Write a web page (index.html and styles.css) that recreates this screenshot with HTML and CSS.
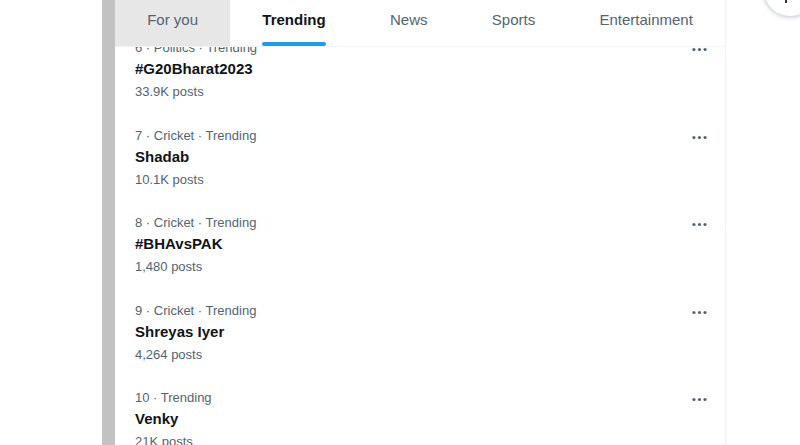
FILE: index.html
```html
<!DOCTYPE html>
<html>
<head>
<meta charset="utf-8">
<link rel="stylesheet" href="styles.css">
</head>
<body>
<div class="page">
  <div class="spacer"></div>
  <div class="rail"></div>
  <main class="column">
    <nav class="tabs">
      <div class="tab hover"><div class="inner"><span class="label">For you</span><span class="bar"></span></div></div>
      <div class="tab active"><div class="inner"><span class="label">Trending</span><span class="bar"></span></div></div>
      <div class="tab"><div class="inner"><span class="label">News</span><span class="bar"></span></div></div>
      <div class="tab"><div class="inner"><span class="label">Sports</span><span class="bar"></span></div></div>
      <div class="tab"><div class="inner"><span class="label">Entertainment</span><span class="bar"></span></div></div>
    </nav>
    <section class="list">
      <div class="trend first">
        <div class="info">
          <div class="meta">6 · Politics · Trending</div>
          <div class="title">#G20Bharat2023</div>
          <div class="posts">33.9K posts</div>
        </div>
        <svg class="more" viewBox="0 0 24 24"><circle cx="5" cy="12" r="2"/><circle cx="12" cy="12" r="2"/><circle cx="19" cy="12" r="2"/></svg>
      </div>
      <div class="trend">
        <div class="info">
          <div class="meta">7 · Cricket · Trending</div>
          <div class="title">Shadab</div>
          <div class="posts">10.1K posts</div>
        </div>
        <svg class="more" viewBox="0 0 24 24"><circle cx="5" cy="12" r="2"/><circle cx="12" cy="12" r="2"/><circle cx="19" cy="12" r="2"/></svg>
      </div>
      <div class="trend">
        <div class="info">
          <div class="meta">8 · Cricket · Trending</div>
          <div class="title">#BHAvsPAK</div>
          <div class="posts">1,480 posts</div>
        </div>
        <svg class="more" viewBox="0 0 24 24"><circle cx="5" cy="12" r="2"/><circle cx="12" cy="12" r="2"/><circle cx="19" cy="12" r="2"/></svg>
      </div>
      <div class="trend">
        <div class="info">
          <div class="meta">9 · Cricket · Trending</div>
          <div class="title">Shreyas Iyer</div>
          <div class="posts">4,264 posts</div>
        </div>
        <svg class="more" viewBox="0 0 24 24"><circle cx="5" cy="12" r="2"/><circle cx="12" cy="12" r="2"/><circle cx="19" cy="12" r="2"/></svg>
      </div>
      <div class="trend">
        <div class="info">
          <div class="meta">10 · Trending</div>
          <div class="title">Venky</div>
          <div class="posts">21K posts</div>
        </div>
        <svg class="more" viewBox="0 0 24 24"><circle cx="5" cy="12" r="2"/><circle cx="12" cy="12" r="2"/><circle cx="19" cy="12" r="2"/></svg>
      </div>
    </section>
  </main>
  <aside class="side"></aside>
  <div class="fab"><span class="tick"></span></div>
</div>
</body>
</html>
```

FILE: styles.css
```css
html, body {
  margin: 0;
  padding: 0;
  background: #ffffff;
  overflow: hidden;
}
body {
  font-family: "Liberation Sans", Arial, sans-serif;
  color: #0f1419;
}
.page {
  display: flex;
  height: 445px;
  overflow: hidden;
  position: relative;
}
.spacer {
  width: 102px;
  flex: none;
}
.rail {
  width: 13px;
  flex: none;
  background: #c2c2c2;
}
.column {
  width: 610px;
  flex: none;
  border-right: 1px solid #eff3f4;
  display: flex;
  flex-direction: column;
  overflow: hidden;
}
.side {
  flex: 1;
}
.tabs {
  position: relative;
  z-index: 2;
  display: flex;
  height: 46px;
  border-bottom: 1px solid #eff3f4;
  background: rgba(255, 255, 255, 0.92);
  flex: none;
}
.tab {
  flex: 1 1 auto;
  display: flex;
  justify-content: center;
  padding: 0 16px;
  font-size: 15px;
  color: #536471;
}
.tab.hover {
  background: #e7e7e8;
}
.inner {
  display: flex;
  flex-direction: column;
}
.label {
  display: block;
  line-height: 20px;
  padding-top: 10px;
}
.bar {
  display: block;
  height: 4px;
  margin-top: 12px;
  border-radius: 9999px;
  visibility: hidden;
}
.tab.active {
  color: #0f1419;
  font-weight: 700;
}
.tab.active .bar {
  visibility: visible;
  background: #1d9bf0;
}
.list {
  margin-top: -21px;
  position: relative;
  z-index: 1;
}
.trend {
  display: flex;
  justify-content: space-between;
  align-items: flex-start;
  padding: 14px 16px 13.5px 20px;
}
.meta, .posts {
  font-size: 13px;
  line-height: 16px;
  color: #536471;
}
.title {
  font-size: 15px;
  line-height: 20px;
  font-weight: 700;
  color: #0f1419;
  margin-top: 3px;
}
.posts {
  margin-top: 5px;
}
.more {
  width: 19px;
  height: 19px;
  fill: #536471;
  flex: none;
}
.fab {
  position: absolute;
  left: 764px;
  top: -36px;
  width: 52px;
  height: 52px;
  border-radius: 50%;
  background: #ffffff;
  box-shadow: 0 0 6px rgba(101, 119, 134, 0.25), 0 1px 3px 1px rgba(101, 119, 134, 0.18);
}
.tick {
  position: absolute;
  left: 21px;
  top: 36px;
  width: 2px;
  height: 3px;
  background: #333;
}
```
